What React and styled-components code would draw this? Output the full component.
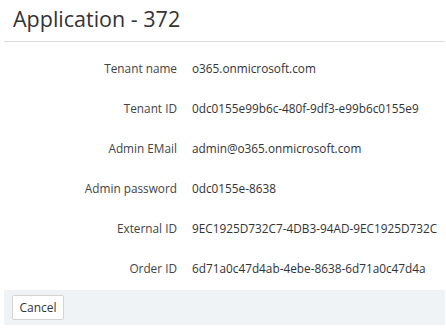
import React from 'react'
import styled, { createGlobalStyle } from 'styled-components'

const GlobalStyle = createGlobalStyle`
  html, body {
    margin: 0;
    padding: 0;
    background: #fff;
  }
  body {
    font-family: "Open Sans", "Liberation Sans", sans-serif;
    color: #333;
  }
`

const fields = [
    ['Tenant name', 'o365.onmicrosoft.com'],
    ['Tenant ID', '0dc0155e99b6c-480f-9df3-e99b6c0155e9'],
    ['Admin EMail', 'admin@o365.onmicrosoft.com'],
    ['Admin password', '0dc0155e-8638'],
    ['External ID', '9EC1925D732C7-4DB3-94AD-9EC1925D732C'],
    ['Order ID', '6d71a0c47d4ab-4ebe-8638-6d71a0c47d4a'],
]

const App = () => {
    return (
        <Page>
            <GlobalStyle />
            <Header>
                <Title>Application - 372</Title>
            </Header>
            <Details>
                {fields.map(([label, value]) => (
                    <Row key={label}>
                        <Label>{label}</Label>
                        <Value>{value}</Value>
                    </Row>
                ))}
            </Details>
            <Footer>
                <Button>Cancel</Button>
            </Footer>
        </Page>
    )
}

export default App

const Page = styled.div`
    width: 441px;
    margin-left: 4px;
`

const Header = styled.div`
    border-bottom: 1px solid #dcdcdc;
    padding: 3px 0 7px 9px;
`

const Title = styled.h1`
    margin: 0;
    font-size: 21.5px;
    line-height: 31px;
    font-weight: 400;
    color: #333;
`

const Details = styled.div`
    display: flex;
    flex-direction: column;
    gap: 20px;
    padding-top: 16px;
    padding-bottom: 12px;
`

const Row = styled.div`
    display: grid;
    grid-template-columns: 173px 1fr;
    column-gap: 15px;
    height: 20px;
    align-items: center;
    font-size: 11.8px;
    line-height: 20px;
`

const Label = styled.div`
    text-align: right;
    color: #444;
`

const Value = styled.div`
    color: #333;
    white-space: nowrap;
`

const Footer = styled.div`
    background: #f0f3f6;
    height: 35px;
    display: flex;
    align-items: center;
    padding: 0 8px;
`

const Button = styled.button`
    font-family: inherit;
    font-size: 12px;
    color: #333;
    background: #fff;
    border: 1px solid #d3d3d3;
    border-radius: 2px;
    height: 25px;
    width: 52px;
    padding: 0;
    cursor: pointer;
`
